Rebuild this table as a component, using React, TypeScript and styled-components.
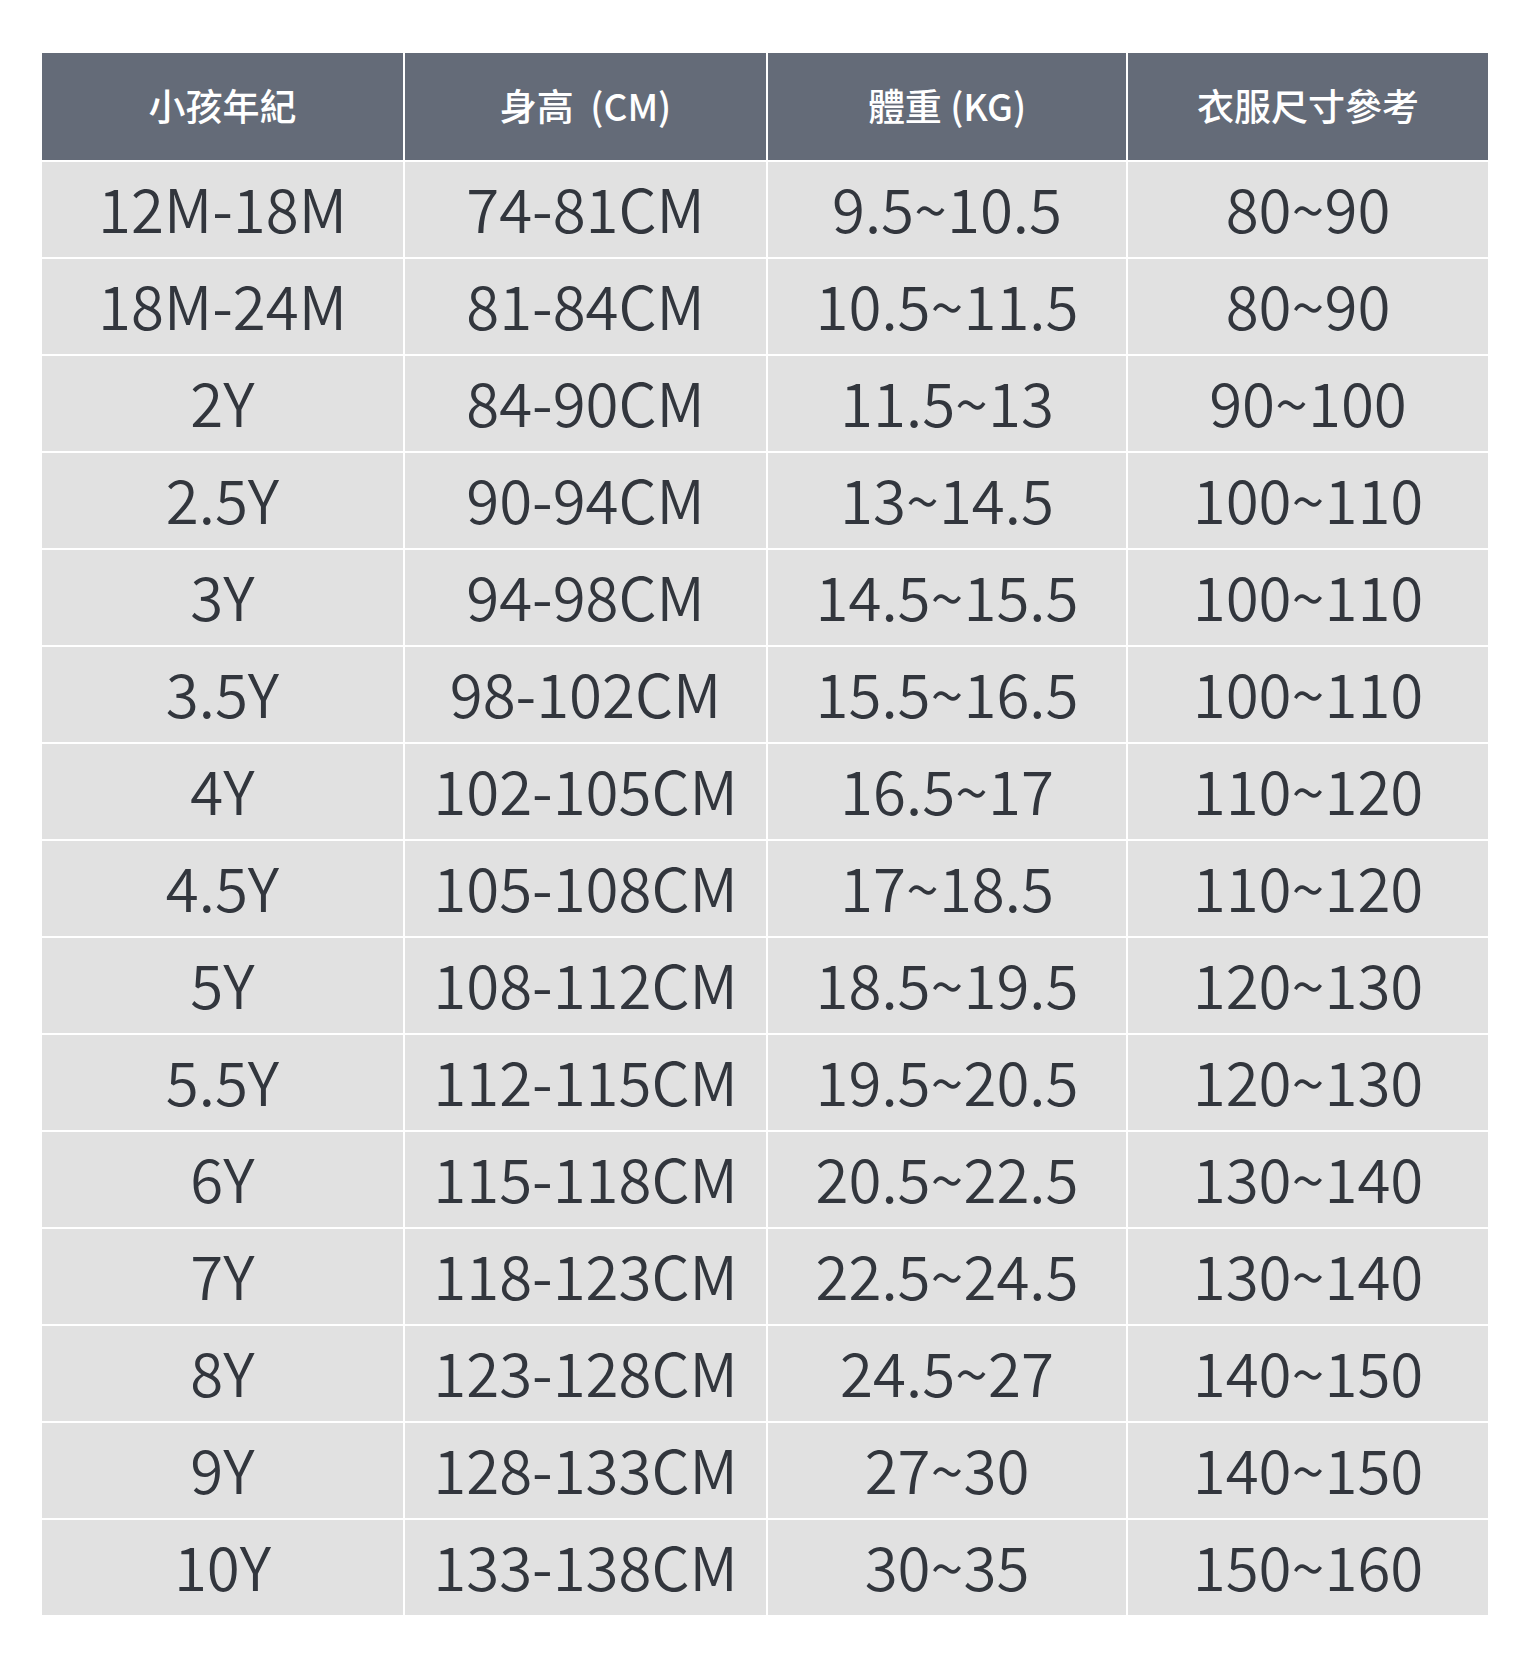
import React from "react";
import styled, { createGlobalStyle } from "styled-components";

const GlobalStyle = createGlobalStyle`
    html, body {
        margin: 0;
        padding: 0;
        background: #ffffff;
    }
    body {
        font-family: "Noto Sans CJK TC", "Noto Sans", sans-serif;
    }
`;

const Page = styled.div`
    padding: 53px 0 40px 42px;
`;

const Table = styled.div`
    display: grid;
    grid-template-columns: 361px 361px 358px 360px;
    grid-auto-rows: 95px;
    grid-template-rows: 107px;
    column-gap: 2px;
    row-gap: 2px;
    width: 1446px;
    background: #ffffff;
`;

const HeadCell = styled.div`
    display: flex;
    align-items: center;
    justify-content: center;
    background: #646b78;
    color: #ffffff;
    font-size: 37px;
    font-weight: 500;
    white-space: pre;
    padding-bottom: 4px;
    box-sizing: border-box;
`;

const Cell = styled.div`
    display: flex;
    align-items: center;
    justify-content: center;
    background: #e1e1e1;
    color: #32363d;
    font-size: 60px;
    font-weight: 350;
    padding-bottom: 6px;
    box-sizing: border-box;
`;

const headers = ["小孩年紀", "身高  (CM)", "體重 (KG)", "衣服尺寸參考"];

const rows: string[][] = [
    ["12M-18M", "74-81CM", "9.5~10.5", "80~90"],
    ["18M-24M", "81-84CM", "10.5~11.5", "80~90"],
    ["2Y", "84-90CM", "11.5~13", "90~100"],
    ["2.5Y", "90-94CM", "13~14.5", "100~110"],
    ["3Y", "94-98CM", "14.5~15.5", "100~110"],
    ["3.5Y", "98-102CM", "15.5~16.5", "100~110"],
    ["4Y", "102-105CM", "16.5~17", "110~120"],
    ["4.5Y", "105-108CM", "17~18.5", "110~120"],
    ["5Y", "108-112CM", "18.5~19.5", "120~130"],
    ["5.5Y", "112-115CM", "19.5~20.5", "120~130"],
    ["6Y", "115-118CM", "20.5~22.5", "130~140"],
    ["7Y", "118-123CM", "22.5~24.5", "130~140"],
    ["8Y", "123-128CM", "24.5~27", "140~150"],
    ["9Y", "128-133CM", "27~30", "140~150"],
    ["10Y", "133-138CM", "30~35", "150~160"],
];

export default function App() {
    return (
        <Page>
            <GlobalStyle />
            <Table>
                {headers.map((h) => (
                    <HeadCell key={h}>{h}</HeadCell>
                ))}
                {rows.map((row, i) =>
                    row.map((value, j) => (
                        <Cell key={`${i}-${j}`}>{value}</Cell>
                    ))
                )}
            </Table>
        </Page>
    );
}
